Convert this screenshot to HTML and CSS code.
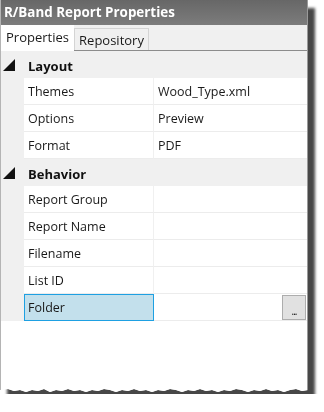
FILE: index.html
```html
<!DOCTYPE html>
<html>
<head>
<meta charset="utf-8">
<link rel="stylesheet" href="styles.css">
</head>
<body>
<div class="wrap">
  <div class="panel">
    <div class="title">R/Band Report Properties</div>
    <div class="tabs">
      <div class="tab active">Properties</div>
      <div class="tab">Repository</div>
    </div>
    <div class="grid">
      <div class="cat"><span class="tri"></span><span class="cat-name">Layout</span></div>
      <div class="row"><div class="name">Themes</div><div class="val">Wood_Type.xml</div></div>
      <div class="row"><div class="name">Options</div><div class="val">Preview</div></div>
      <div class="row"><div class="name">Format</div><div class="val">PDF</div></div>
      <div class="cat"><span class="tri"></span><span class="cat-name">Behavior</span></div>
      <div class="row"><div class="name">Report Group</div><div class="val"></div></div>
      <div class="row"><div class="name">Report Name</div><div class="val"></div></div>
      <div class="row"><div class="name">Filename</div><div class="val"></div></div>
      <div class="row"><div class="name">List ID</div><div class="val"></div></div>
      <div class="row"><div class="name sel">Folder</div><div class="val end"><span class="btn">...</span></div></div>
    </div>
  </div>
</div>
</body>
</html>
```
FILE: styles.css
```css
* { box-sizing: border-box; }
html, body { margin: 0; padding: 0; background: #fff; }
body { font-family: "Open Sans", "Noto Sans", sans-serif; font-size: 12.5px; color: #1a1a1a; }

.wrap {
  width: 308px;
  filter: drop-shadow(7px 8px 1.5px rgba(55,55,55,0.92));
}
.panel {
  width: 308px;
  height: 394px;
  background: #fff;
  border-left: 1px solid #b4b4b4;
  border-right: 1px solid #9a9a9a;
  display: flex;
  flex-direction: column;
  clip-path: polygon(0 0, 308px 0, 308px 390px, 302px 391px, 296px 389px, 290px 390px, 284px 392px, 278px 390px, 272px 391px, 266px 389px, 260px 391px, 254px 390px, 248px 392px, 242px 390px, 236px 389px, 230px 391px, 224px 390px, 218px 392px, 212px 390px, 206px 391px, 200px 389px, 194px 391px, 188px 390px, 182px 392px, 176px 390px, 170px 389px, 164px 391px, 158px 390px, 152px 392px, 146px 390px, 140px 391px, 134px 389px, 128px 391px, 122px 390px, 116px 392px, 110px 390px, 104px 389px, 98px 391px, 92px 390px, 86px 392px, 80px 390px, 74px 391px, 68px 389px, 62px 391px, 56px 390px, 50px 392px, 44px 389px, 38px 391px, 32px 390px, 26px 392px, 20px 390px, 14px 391px, 8px 389px, 0 390px);
}
.title {
  height: 25px;
  background: linear-gradient(#676767, #7c7c7c);
  color: #fff;
  font-weight: 700;
  font-size: 13.4px;
  line-height: 25px;
  padding-left: 3px;
  white-space: nowrap;
}
.tabs {
  height: 26px;
  background: #f0f0f0;
  display: flex;
  align-items: flex-end;
  border-bottom: 1px solid #8c8c8c;
}
.tab {
  height: 22px;
  font-size: 13px;
  line-height: 22px;
  background: #f0f0f0;
  border: 1px solid #d4d4d4;
  border-bottom: none;
  width: 75px;
  text-align: center;
}
.tab.active {
  height: 26px;
  width: 73px;
  background: #fff;
  border: none;
  line-height: 25px;
  margin-bottom: -1px;
  position: relative;
}
.grid {
  flex: 1;
  background: #fff;
}
.cat {
  height: 27px;
  background: #f0f0f0;
  display: flex;
  align-items: center;
}
.tri {
  width: 0; height: 0;
  margin-left: 2px;
  border-style: solid;
  border-width: 0 0 12px 12px;
  border-color: transparent transparent #111 transparent;
}
.cat-name {
  margin-left: 13px;
  padding-top: 2px;
  font-weight: 700;
  color: #111;
  font-size: 13px;
}
.row {
  height: 27px;
  display: flex;
  background: #f0f0f0;
}
.name {
  width: 130px;
  margin-left: 23px;
  background: #fff;
  border-right: 1px solid #f0f0f0;
  border-bottom: 1px solid #ececec;
  padding-left: 4px;
  line-height: 28px;
}
.name.sel {
  background: #c3e0ec;
  border: 1px solid #1ea0e2;
  padding-left: 3px;
  line-height: 26px;
}
.val {
  flex: 1;
  background: #fff;
  border-bottom: 1px solid #ececec;
  padding-left: 4px;
  line-height: 28px;
  display: flex;
}
.val.end { justify-content: flex-end; padding-right: 1px; padding-top: 1px; }
.btn {
  width: 24px;
  height: 25px;
  background: #e1e1e1;
  border: 1px solid #adadad;
  font-size: 10px;
  line-height: 30px;
  text-align: center;
  letter-spacing: -1px;
  color: #111;
}
```
